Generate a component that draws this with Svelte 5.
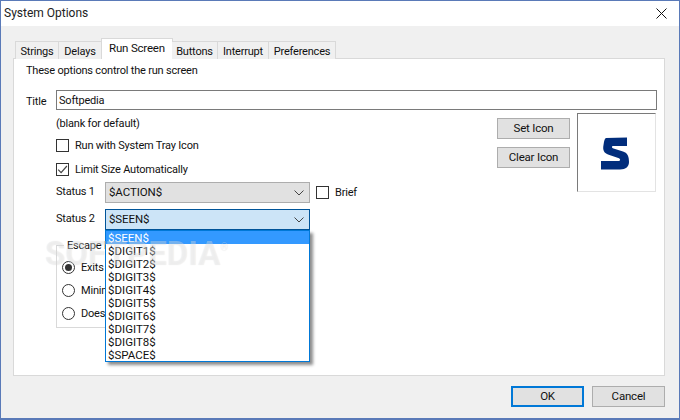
<script>
  const tabs = [
    { label: 'Strings', w: 44 },
    { label: 'Delays', w: 43 },
    { label: 'Run Screen', w: 72, active: true },
    { label: 'Buttons', w: 46 },
    { label: 'Interrupt', w: 51 },
    { label: 'Preferences', w: 67 }
  ];
  const items = ['$SEEN$', '$DIGIT1$', '$DIGIT2$', '$DIGIT3$', '$DIGIT4$', '$DIGIT5$', '$DIGIT6$', '$DIGIT7$', '$DIGIT8$', '$SPACE$'];
  const radios = [
    { label: 'Exits', on: true },
    { label: 'Minim' },
    { label: 'Does' }
  ];
</script>

<div class="window">
  <header class="titlebar">
    <span class="title">System Options</span>
    <svg class="close" width="11" height="11" viewBox="0 0 11 11"><path d="M.5.5l10 10M10.5.5l-10 10" stroke="#111" stroke-width="1" fill="none"/></svg>
  </header>

  <div class="client">
    <nav class="tabs">
      {#each tabs as t}
        <div class="tab" class:active={t.active} style="width:{t.w}px">{t.label}</div>
      {/each}
    </nav>

    <section class="panel">
      <p class="intro">These options control the run screen</p>

      <div class="title-row">
        <label class="title-label" for="title-input">Title</label>
        <div class="textbox" id="title-input">Softpedia</div>
      </div>

      <div class="body">
        <div class="left">
          <div class="hint">(blank for default)</div>
          <div class="check-row first"><span class="box"></span><span>Run with System Tray Icon</span></div>
          <div class="check-row second">
            <span class="box">
              <svg width="11" height="11" viewBox="0 0 11 11"><path d="M1.2 5.6l2.9 3L9.900 2" stroke="#444" stroke-width="1.2" fill="none"/></svg>
            </span>
            <span>Limit Size Automatically</span>
          </div>

          <div class="status-row one">
            <span class="status-label">Status 1</span>
            <div class="combo">
              <span>$ACTION$</span>
              <svg class="chev" width="10" height="6" viewBox="0 0 10 6"><path d="M.5.5L5 5 9.5.5" stroke="#444" fill="none"/></svg>
            </div>
            <span class="box brief-box"></span>
            <span>Brief</span>
          </div>

          <div class="status-row two">
            <span class="status-label">Status 2</span>
            <div class="combo open">
              <span>$SEEN$</span>
              <svg class="chev" width="10" height="6" viewBox="0 0 10 6"><path d="M.5.5L5 5 9.5.5" stroke="#444" fill="none"/></svg>
            </div>
          </div>

          <fieldset class="group">
            <legend>Escape B</legend>
            {#each radios as r}
              <div class="radio-row">
                <span class="radio" class:on={r.on}></span>
                <span>{r.label}</span>
              </div>
            {/each}
          </fieldset>
        </div>

        <div class="right">
          <div class="icon-btns">
            <button class="btn">Set Icon</button>
            <button class="btn">Clear Icon</button>
          </div>
          <div class="iconbox">
            <svg class="logo" width="28" height="33" viewBox="0 0 28 33">
              <path d="M5 1L26 .5V9H12C10.500 9 10.500 11 12.500 11.500L22 14.500C27 16 28 20 28 25C28 29.500 25 32.500 19 32.500H0V24H18C19.500 24 19.500 21.800 18 21.300L7 17.500C3 16 1.500 13 2.500 8C3.200 4 3.500 1.500 5 1Z" fill="#012d7c"/>
            </svg>
          </div>
        </div>
      </div>
    </section>

    <footer class="footer">
      <button class="btn default">OK</button>
      <button class="btn">Cancel</button>
    </footer>

    <ul class="dropdown">
      {#each items as it, i}
        <li class:sel={i === 0}>{it}</li>
      {/each}
    </ul>

    <div class="watermark">SOFTPEDIA<span class="reg">®</span></div>
  </div>
</div>

<style>
  :global(body) { margin: 0; background: #f0f0f0; }
  .window {
    width: 680px;
    height: 420px;
    box-sizing: border-box;
    border: 1px solid #5a7ab8;
    border-bottom-width: 2px;
    background: #f0f0f0;
    display: flex;
    flex-direction: column;
    font: 11px/13px Roboto, sans-serif;
    letter-spacing: -.2px;
    color: #111;
    overflow: hidden;
  }
  .titlebar {
    height: 25px;
    flex: none;
    background: #fff;
    display: flex;
    align-items: center;
    justify-content: space-between;
    padding: 0 12px 0 3px;
    color: #222;
    font: 12px/13px Roboto, sans-serif;
    letter-spacing: 0;
  }
  .client { position: relative; flex: 1; padding: 0 14px 0 12px; display: flex; flex-direction: column; }
  .tabs { display: flex; height: 33px; align-items: flex-end; padding-left: 2px; gap: 0; margin-bottom: -1px; position: relative; z-index: 1; }
  .tab {
    height: 18px;
    box-sizing: border-box;
    background: #f0f0f0;
    border: 1px solid #d9d9d9;
    border-left-width: 0;
    border-bottom: 0;
    text-align: center;
    line-height: 19px;
  }
  .tab:first-child { border-left-width: 1px; }
  .tab.active {
    height: 21px;
    background: #fff;
    margin-left: -1px;
    margin-right: -1px;
    border-left-width: 1px;
    line-height: 18px;
    font-size: 11.5px;
  }
  .panel {
    height: 318px;
    box-sizing: border-box;
    background: #fff;
    border: 1px solid #d9d9d9;
    padding: 5px 7px 0 12px;
    display: flex;
    flex-direction: column;
  }
  .intro { margin: 0 0 13px 0; line-height: 14px; height: 13px; }
  .title-row { display: flex; align-items: center; }
  .title-label { width: 30px; padding-top: 3px; }
  .textbox {
    flex: 1;
    height: 20px;
    box-sizing: border-box;
    border: 1px solid #7a7a7a;
    padding: 0 2px;
    line-height: 20px;
  }
  .body { display: flex; justify-content: space-between; }
  .left { padding-left: 30px; width: 300px; }
  .hint { margin-top: 7px; height: 13px; line-height: 14px; }
  .check-row { display: flex; align-items: center; gap: 6px; height: 13px; }
  .check-row.first { margin-top: 9px; }
  .check-row.second { margin-top: 11px; }
  .box {
    display: block;
    flex: none;
    width: 13px;
    height: 13px;
    box-sizing: border-box;
    border: 1px solid #333;
    background: #fff;
  }
  .box svg { display: block; }
  .status-row { display: flex; align-items: center; }
  .status-row.one { margin-top: 6px; }
  .status-row.two { margin-top: 6px; }
  .status-label { width: 49px; flex: none; padding-bottom: 2px; }
  .combo {
    width: 205px;
    height: 21px;
    flex: none;
    box-sizing: border-box;
    border: 1px solid #adadad;
    background: #e1e1e1;
    display: flex;
    align-items: center;
    justify-content: space-between;
    padding: 0 4px 0 3px;
    margin-right: 6px;
    font-size: 11.5px;
    letter-spacing: -.1px;
  }
  .combo.open { background: #cce4f7; border-color: #005499; }
  .chev { margin-right: 1px; }
  .brief-box { margin-right: 6px; }
  .group {
    margin: 9px 0 0 0;
    padding: 9px 0 0 5px;
    width: 195px;
    height: 89px;
    box-sizing: border-box;
    border: 1px solid #d9d9d9;
    min-width: 0;
  }
  .group legend { padding: 0 3px; margin-left: 2px; line-height: 13px; }
  .radio-row { display: flex; align-items: center; gap: 6px; height: 13px; margin-bottom: 10px; white-space: nowrap; }
  .radio {
    width: 13px;
    height: 13px;
    flex: none;
    box-sizing: border-box;
    border: 1px solid #333;
    border-radius: 50%;
    background: #fff;
    position: relative;
  }
  .radio.on::after {
    content: '';
    position: absolute;
    inset: 2px;
    border-radius: 50%;
    background: #333;
  }
  .right { display: flex; gap: 7px; margin-right: 1px; margin-top: 3px; }
  .icon-btns { display: flex; flex-direction: column; gap: 8px; padding-top: 5px; }
  .btn {
    width: 73px;
    height: 21px;
    box-sizing: border-box;
    border: 1px solid #adadad;
    background: #e1e1e1;
    font: inherit;
    font-size: 11.5px;
    letter-spacing: inherit;
    color: inherit;
    padding: 0;
  }
  .iconbox {
    width: 79px;
    height: 79px;
    box-sizing: border-box;
    border: 1px solid #e3e3e3;
    border-top: 1px solid #7a7a7a;
    border-left: 1px solid #7a7a7a;
    background: #fff;
    display: flex;
    align-items: center;
    justify-content: center;
  }
  .logo { margin-right: 3px; margin-top: 1px; }
  .footer { display: flex; justify-content: flex-end; gap: 8px; margin-top: 10px; }
  .btn.default { border: 2px solid #0078d7; }
  .dropdown {
    position: absolute;
    left: 104px;
    top: 204px;
    width: 205px;
    margin: 0;
    padding: 0;
    list-style: none;
    box-sizing: border-box;
    background: #fff;
    border: 1px solid #0078d7;
    box-shadow: 3px 3px 3px rgba(0,0,0,.45);
    font-size: 11.5px;
    letter-spacing: 0;
  }
  .dropdown li { height: 13px; line-height: 14px; padding-left: 2px; }
  .dropdown li.sel { background: #3399ff; color: #fff; }
  .watermark {
    position: absolute;
    left: 44px;
    top: 205px;
    font: bold 33px/34px Roboto, sans-serif;
    letter-spacing: 0;
    color: rgba(255,255,255,.35);
    text-shadow: 0 0 1px rgba(0,0,0,.1);
    pointer-events: none;
  }
  .reg { font-size: 10px; vertical-align: 14px; font-weight: normal; }
</style>
